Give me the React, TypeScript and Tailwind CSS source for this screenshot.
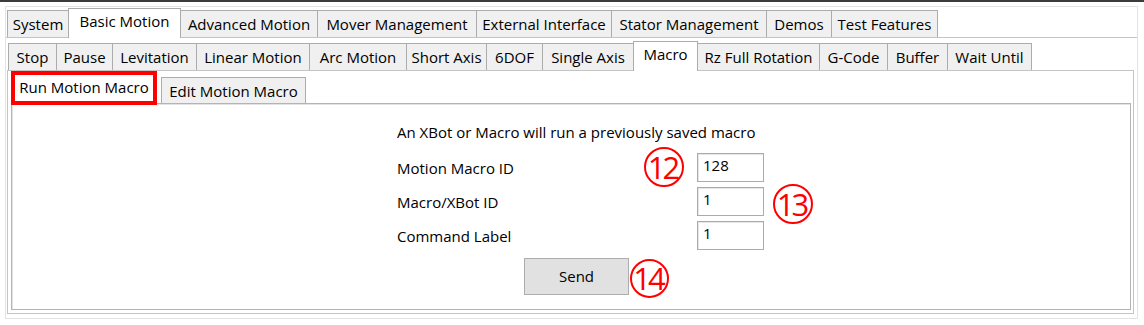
import React from "react";

const mainTabs: [string, number][] = [
  ["System", 62],
  ["Basic Motion", 113],
  ["Advanced Motion", 138],
  ["Mover Management", 160],
  ["External Interface", 136],
  ["Stator Management", 156],
  ["Demos", 66],
  ["Test Features", 107],
];

const motionTabs: [string, number][] = [
  ["Stop", 49],
  ["Pause", 57],
  ["Levitation", 85],
  ["Linear Motion", 114],
  ["Arc Motion", 98],
  ["Short Axis", 81],
  ["6DOF", 57],
  ["Single Axis", 92],
  ["Macro", 65],
  ["Rz Full Rotation", 123],
  ["G-Code", 69],
  ["Buffer", 61],
  ["Wait Until", 85],
];

function Tab({ label, width, selected, first }: { label: string; width: number; selected?: boolean; first?: boolean }) {
  if (selected) {
    return (
      <div
        style={{ width }}
        className={`relative z-10 -mb-px flex h-[30px] items-start justify-center border border-b-0 border-[#acacac] bg-white pt-[1px] leading-[22px] ${first ? "" : "-ml-px"}`}
      >
        {label}
      </div>
    );
  }
  return (
    <div
      style={{ width }}
      className={`flex h-[27px] items-center justify-center border border-b-0 border-[#acacac] bg-[#f0f0f0] leading-[22px] ${first ? "" : "-ml-px"}`}
    >
      {label}
    </div>
  );
}

function Marker({ n, className }: { n: string; className: string }) {
  return (
    <div
      className={`absolute flex items-center justify-center rounded-full border-2 border-[#ff0000] text-[31px] leading-none tracking-[-3px] text-[#ff0000] ${className}`}
    >
      <span className="-ml-[3px]">{n}</span>
    </div>
  );
}

function Field({ value }: { value: string }) {
  return (
    <div className="h-[29px] w-[67px] border border-[#ababab] bg-white px-[5px] leading-[22px] shadow-[inset_1px_1px_0_#e6e6e6]">
      {value}
    </div>
  );
}

export default function App() {
  return (
    <div className="h-[325px] w-[1144px] overflow-hidden bg-white font-['Open_Sans',sans-serif] text-[15px] text-black">
      <div className="h-[2px] bg-[#3c3c3c]" />
      <div className="ml-[5px] mt-[4px] flex h-[313px] w-[1133px] flex-col border border-[#e3e3e3]">
        <div className="flex h-[30px] items-end pl-[1px]">
          {mainTabs.map(([label, w], i) => (
            <Tab key={label} label={label} width={w} first={i === 0} selected={label === "Basic Motion"} />
          ))}
        </div>
        <div className="border-t border-[#c4c4c4]" />
        <div className="ml-[1px] w-[1127px]">
          <div className="flex h-[32px] items-end pl-[1px]">
            {motionTabs.map(([label, w], i) => (
              <Tab key={label} label={label} width={w} first={i === 0} selected={label === "Macro"} />
            ))}
          </div>
          <div className="h-[244px] border border-[#c4c4c4] bg-white">
            <div className="flex h-[32px] items-end pl-[3px]">
              <div className="relative z-10 -mb-[2px] flex h-[34px] w-[146px] items-center justify-center border-4 border-[#ff0000] bg-white pb-[2px] leading-[22px]">
                Run Motion Macro
              </div>
              <div className="ml-[4px] flex h-[26px] w-[145px] items-center justify-center border border-b-0 border-[#acacac] bg-[#f0f0f0] leading-[22px]">
                Edit Motion Macro
              </div>
            </div>
            <div className="relative ml-[3px] h-[207px] w-[1120px] border border-[#b4b4b4] shadow-[inset_1px_1px_0_#e3e3e3]">
              <div className="pl-[385px] pt-[17px]">
                <div className="leading-[22px]">An XBot or Macro will run a previously saved macro</div>
                <div className="mt-[10px] flex flex-col gap-[5px]">
                  {[
                    ["Motion Macro ID", "128"],
                    ["Macro/XBot ID", "1"],
                    ["Command Label", "1"],
                  ].map(([label, value]) => (
                    <div key={label} className="flex items-center">
                      <div className="w-[300px] pt-[1px] leading-[22px]">{label}</div>
                      <Field value={value} />
                    </div>
                  ))}
                </div>
                <button className="ml-[127px] mt-[8px] flex h-[37px] w-[105px] items-center justify-center border border-[#adadad] bg-[#e1e1e1] pb-[1px] leading-[22px]">
                  Send
                </button>
              </div>
              <Marker n="12" className="left-[632px] top-[43px] h-[40px] w-[40px]" />
              <Marker n="13" className="left-[761px] top-[80px] h-[40px] w-[40px]" />
              <Marker n="14" className="left-[618px] top-[155px] h-[39px] w-[39px]" />
            </div>
          </div>
        </div>
      </div>
    </div>
  );
}
